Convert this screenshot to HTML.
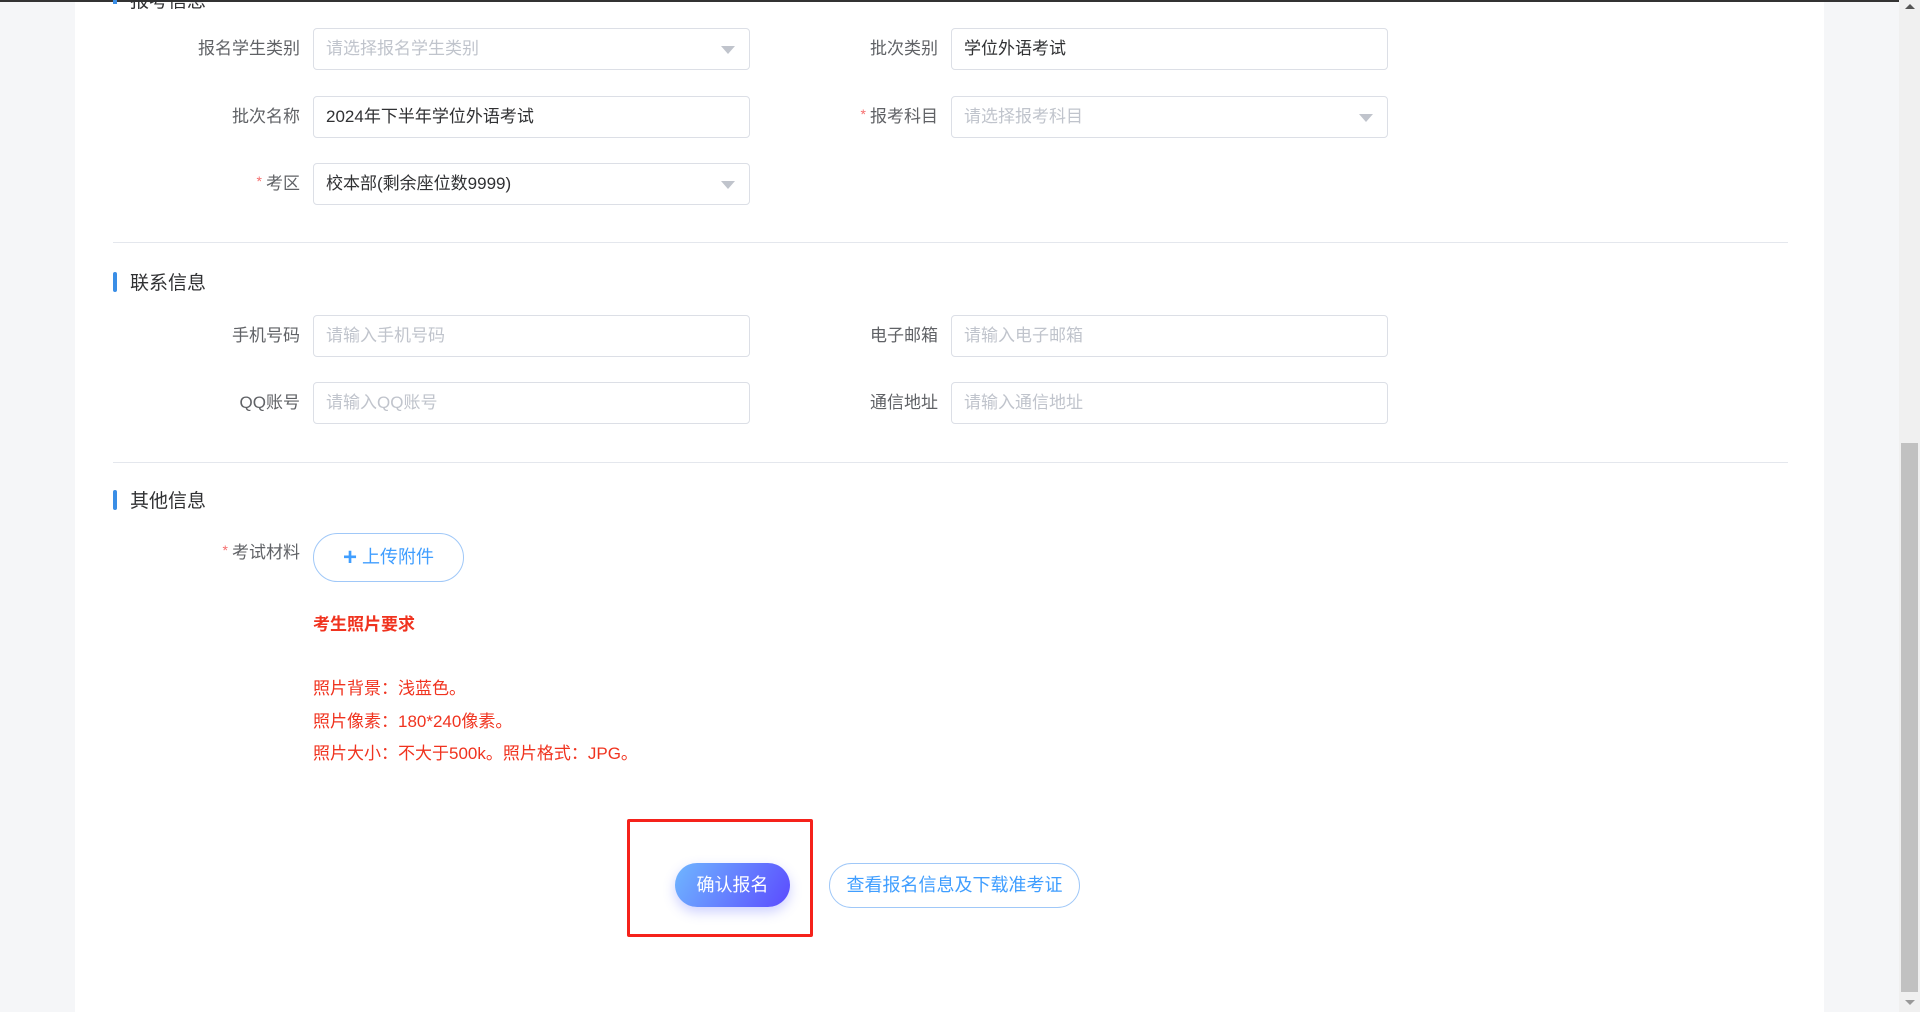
<!DOCTYPE html>
<html><head><meta charset="utf-8">
<style>
*{margin:0;padding:0;box-sizing:border-box}
body{width:1920px;height:1012px;overflow:hidden;background:#f5f6f8;font-family:"Liberation Sans","Noto Sans CJK SC",sans-serif;position:relative}
.top{position:absolute;left:0;top:0;width:1899px;height:2px;background:#333}
.panel{position:absolute;left:75px;top:2px;width:1749px;height:1010px;background:#fff}
.sb{position:absolute;left:1899px;top:0;width:21px;height:1012px;background:#f0f0f0}
.thumb{position:absolute;left:1901px;top:443px;width:17px;height:549px;background:#c1c1c1}
.a{position:absolute}
.lbl{position:absolute;font-size:17px;color:#606266;text-align:right;width:200px;line-height:42px}
.lbl .s{color:#f56c6c;font-size:14px;margin-right:4px;position:relative;top:-3px}
.inp{position:absolute;height:42px;border:1px solid #dcdfe6;border-radius:4px;font-size:17px;line-height:40px;padding-left:12px;color:#303133;background:#fff}
.ph{color:#c0c4cc}
.arr{position:absolute;right:14px;top:17px;width:0;height:0;border-left:7px solid transparent;border-right:7px solid transparent;border-top:8px solid #c0c4cc}
.hd{position:absolute;left:113px;font-size:19px;color:#303133}
.hd:before{content:"";position:absolute;left:0;top:4px;width:4px;height:20px;background:#3a8ee6;border-radius:2px}
.hd span{margin-left:17px}
.div{position:absolute;left:113px;width:1675px;height:1px;background:#e4e7ed}
.red{position:absolute;left:313px;color:#f0331f;font-size:17px}
</style></head><body>
<div class="top"></div>
<div class="panel"></div>
<div class="sb"></div>
<div class="thumb"></div>
<div class="a" style="left:1905px;top:4px;width:0;height:0;border-left:5px solid transparent;border-right:5px solid transparent;border-bottom:5px solid #555"></div>
<div class="a" style="left:1905px;top:1000px;width:0;height:0;border-left:5px solid transparent;border-right:5px solid transparent;border-top:5px solid #999"></div>

<div class="a" style="left:113px;top:-10px;width:4px;height:14px;background:#3a8ee6"></div>
<div class="a" style="left:130px;top:-14px;font-size:19px;color:#303133">报考信息</div>

<div class="lbl" style="left:100px;top:28px">报名学生类别</div>
<div class="inp" style="left:313px;top:28px;width:437px"><span class="ph">请选择报名学生类别</span><i class="arr"></i></div>
<div class="lbl" style="left:738px;top:28px">批次类别</div>
<div class="inp" style="left:951px;top:28px;width:437px">学位外语考试</div>

<div class="lbl" style="left:100px;top:96px">批次名称</div>
<div class="inp" style="left:313px;top:96px;width:437px">2024年下半年学位外语考试</div>
<div class="lbl" style="left:738px;top:96px"><span class="s">*</span>报考科目</div>
<div class="inp" style="left:951px;top:96px;width:437px"><span class="ph">请选择报考科目</span><i class="arr"></i></div>

<div class="lbl" style="left:100px;top:163px"><span class="s">*</span>考区</div>
<div class="inp" style="left:313px;top:163px;width:437px">校本部(剩余座位数9999)<i class="arr"></i></div>

<div class="div" style="top:242px"></div>
<div class="hd" style="top:268px"><span>联系信息</span></div>

<div class="lbl" style="left:100px;top:315px">手机号码</div>
<div class="inp" style="left:313px;top:315px;width:437px"><span class="ph">请输入手机号码</span></div>
<div class="lbl" style="left:738px;top:315px">电子邮箱</div>
<div class="inp" style="left:951px;top:315px;width:437px"><span class="ph">请输入电子邮箱</span></div>

<div class="lbl" style="left:100px;top:382px">QQ账号</div>
<div class="inp" style="left:313px;top:382px;width:437px"><span class="ph">请输入QQ账号</span></div>
<div class="lbl" style="left:738px;top:382px">通信地址</div>
<div class="inp" style="left:951px;top:382px;width:437px"><span class="ph">请输入通信地址</span></div>

<div class="div" style="top:462px"></div>
<div class="hd" style="top:486px"><span>其他信息</span></div>

<div class="lbl" style="left:100px;top:532px;line-height:42px"><span class="s">*</span>考试材料</div>
<div class="a" style="left:313px;top:533px;width:151px;height:49px;border:1px solid #a0c8f8;border-radius:25px;color:#409eff;font-size:18px;line-height:47px;text-align:center"><b style="font-size:24px;font-weight:bold;vertical-align:-2px">+</b> 上传附件</div>

<div class="red" style="top:610px;font-weight:bold;font-size:17px">考生照片要求</div>
<div class="red" style="top:674px">照片背景：浅蓝色。</div>
<div class="red" style="top:707px">照片像素：180*240像素。</div>
<div class="red" style="top:739px">照片大小：不大于500k。照片格式：JPG。</div>

<div class="a" style="left:627px;top:819px;width:186px;height:118px;border:3px solid #f5221b;border-radius:2px"></div>
<div class="a" style="left:675px;top:863px;width:115px;height:44px;border-radius:22px;background:linear-gradient(120deg,#6fb6ff,#5b4bff);box-shadow:0 5px 12px rgba(90,100,255,.3);color:#fff;font-size:18px;line-height:44px;text-align:center">确认报名</div>
<div class="a" style="left:829px;top:863px;width:251px;height:45px;border:1px solid #a0c8f8;border-radius:23px;color:#409eff;font-size:18px;line-height:43px;text-align:center">查看报名信息及下载准考证</div>
</body></html>
